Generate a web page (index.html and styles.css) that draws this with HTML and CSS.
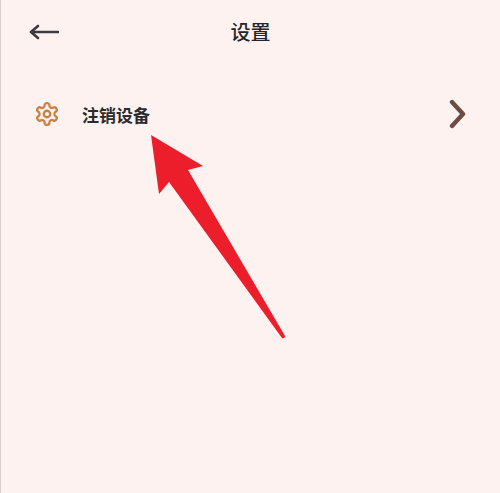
FILE: index.html
```html
<!DOCTYPE html>
<html lang="zh-CN">

<head>
	<meta charset="UTF-8">
	<meta name="viewport" content="width=device-width, initial-scale=1.0">
	<title>设置</title>
	<link rel="stylesheet" href="styles.css">
</head>

<body>
	<div class="page">
		<div class="top-bar">
			<svg class="back-icon" width="30" height="16" viewBox="0 0 30 16">
				<path d="M29 8H2M9 2L2 8l7 6" />
			</svg>
			<div class="title">设置</div>
			<div></div>
		</div>
		<div class="menu-row">
			<svg class="gear-icon" width="26" height="26" viewBox="0 0 24 24">
				<path d="M12.22 2h-.44a2 2 0 0 0-2 2v.18a2 2 0 0 1-1 1.73l-.43.25a2 2 0 0 1-2 0l-.15-.08a2 2 0 0 0-2.73.73l-.22.38a2 2 0 0 0 .73 2.73l.15.1a2 2 0 0 1 1 1.72v.51a2 2 0 0 1-1 1.74l-.15.09a2 2 0 0 0-.73 2.73l.22.38a2 2 0 0 0 2.73.73l.15-.08a2 2 0 0 1 2 0l.43.25a2 2 0 0 1 1 1.73V20a2 2 0 0 0 2 2h.44a2 2 0 0 0 2-2v-.18a2 2 0 0 1 1-1.73l.43-.25a2 2 0 0 1 2 0l.15.08a2 2 0 0 0 2.73-.73l.22-.39a2 2 0 0 0-.73-2.73l-.15-.08a2 2 0 0 1-1-1.74v-.5a2 2 0 0 1 1-1.74l.15-.09a2 2 0 0 0 .73-2.73l-.22-.38a2 2 0 0 0-2.73-.73l-.15.08a2 2 0 0 1-2 0l-.43-.25a2 2 0 0 1-1-1.73V4a2 2 0 0 0-2-2z" />
				<circle cx="12" cy="12" r="3" />
			</svg>
			<div class="menu-label">注销设备</div>
			<svg class="chevron" width="18" height="32" viewBox="0 0 18 32">
				<path d="M3 4l11 12L3 28" />
			</svg>
		</div>
		<!-- red pointer drawn over the page -->
		<svg class="pointer" width="500" height="493" viewBox="0 0 500 493">
			<path d="M151 135L203 166L188 170L285 336Q285 339 282 338L169 182L159 194Z" />
		</svg>
	</div>
</body>
</html>
```

FILE: styles.css
```css
body {
	padding: 0;
	margin: 0;
	background-color: #fef2f0;
	font-family: "Noto Sans CJK SC", "Liberation Sans", sans-serif;
}

.page {
	position: relative;
	height: 493px;
	overflow: hidden;
	border-left: 1px solid #d9cfcd;
	box-sizing: border-box;
}

.top-bar {
	display: grid;
	grid-template-columns: 1fr auto 1fr;
	align-items: center;
	height: 64px;
}

.back-icon {
	margin-left: 28px;
}

.back-icon path {
	fill: none;
	stroke: #3d3b42;
	stroke-width: 2.6;
	stroke-linecap: round;
	stroke-linejoin: round;
}

.title {
	font-size: 20px;
	font-weight: 500;
	color: #26262a;
	margin-bottom: 1px;
}

.menu-row {
	display: flex;
	align-items: center;
	height: 60px;
	margin-top: 20px;
	padding: 0 33px 0 33px;
}

.gear-icon {
	fill: none;
	stroke: #ca8143;
	stroke-width: 2.1;
	stroke-linecap: round;
	stroke-linejoin: round;
}

.menu-label {
	flex: 1;
	margin-left: 22px;
	font-size: 17px;
	font-weight: 700;
	color: #2b2b2e;
}

.chevron path {
	fill: none;
	stroke: #6d4c42;
	stroke-width: 4.4;
	stroke-linecap: round;
	stroke-linejoin: round;
}

.pointer {
	position: absolute;
	left: -1px;
	top: 0;
}

.pointer path {
	fill: #ec1e2c;
}
```
